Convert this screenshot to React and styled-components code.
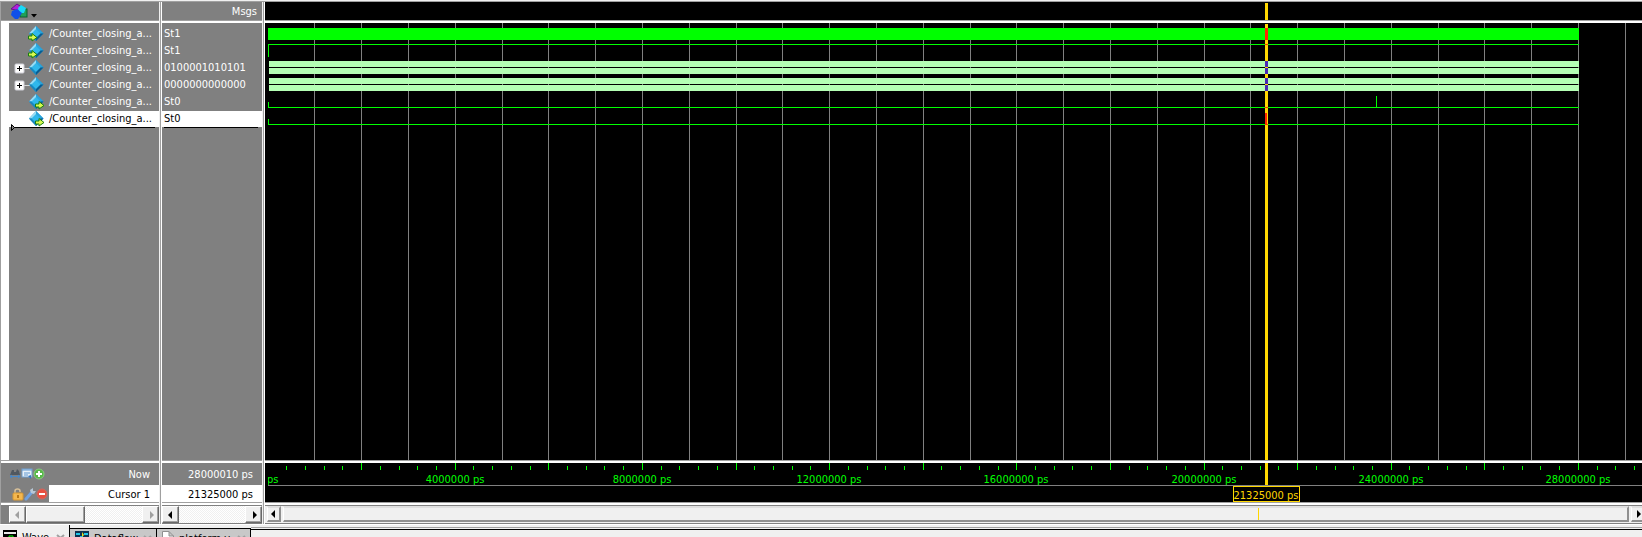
import React from "react";
import styled, { createGlobalStyle, css } from "styled-components";

const gray = "#808080";
const face = "#f0f0f0";
const edge = "#a0a0a0";
const lime = "#00ff00";
const gold = "#ffd700";
const font = '"DejaVu Sans Condensed", "DejaVu Sans", sans-serif';

const GlobalStyle = createGlobalStyle`
  * { box-sizing: border-box; }
  body { margin: 0; overflow: hidden; background: ${face}; }
  button { font: inherit; padding: 0; margin: 0; }
`;

const Window = styled.main`
  display: flex;
  flex-direction: column;
  height: 100vh;
  overflow: hidden;
  background: ${face};
  color: #fff;
  font-family: ${font};
  font-size: 11px;
  line-height: 17px;
`;

const Viewer = styled.section`
  display: flex;
  flex: 1;
  min-height: 0;
  border-top: 1px solid ${edge};
  margin-top: 1px;
`;

const Pane = styled.div`
  display: flex;
  flex-direction: column;
  flex: ${(p) => (p.$width ? `0 0 ${p.$width}px` : "1 1 0")};
  min-width: 0;
  border-left: ${(p) => (p.$edge ? `1px solid ${edge}` : "0")};
  background: ${(p) => (p.$dark ? "#000" : gray)};
`;

const VerticalSash = styled.div`
  flex: 0 0 3px;
  border-left: 1px solid ${face};
  border-right: 1px solid #fff;
  background: ${edge};
`;

const HorizontalSash = styled.div`
  flex: 0 0 3px;
  border-top: 1px solid ${edge};
  background: #fff;
`;

const PaneHeader = styled.header`
  display: flex;
  align-items: center;
  justify-content: ${(p) => (p.$end ? "flex-end" : "flex-start")};
  flex: 0 0 18px;
  padding: 1px 5px 0 8px;
  overflow: hidden;
`;

const MenuButton = styled.button`
  display: flex;
  border: 0;
  background: none;
`;

const PaneBody = styled.div`
  flex: 1;
  min-height: 0;
  overflow: hidden;
  padding-top: ${(p) => (p.$chart ? 0 : 2)}px;
  border-left: ${(p) => (p.$gutter ? "8px solid #fff" : "0")};
`;

const SignalList = styled.ul`
  position: relative;
  margin: 0;
  padding: 0;
  list-style: none;
`;

const selectedRow = css`
  background: linear-gradient(${gray} 1px, #fff 1px);
  color: #000;
`;

const SignalRow = styled.li`
  display: flex;
  align-items: center;
  height: 17px;
  padding-left: ${(p) => p.$indent || 0}px;
  white-space: nowrap;
  ${(p) => p.$selected && selectedRow}
`;

const InsertLine = styled.hr`
  height: 1px;
  margin: 0 4px 0 ${(p) => p.$start}px;
  border: 0;
  background: #000;
`;

const InsertMark = styled.svg`
  position: absolute;
  left: 2px;
  bottom: -3px;
`;

const Icon = styled.svg`
  display: block;
  flex: none;
`;

const Footer = styled.footer`
  display: grid;
  grid-template-rows: 22px 17px;
  flex: none;
`;

const FooterRow = styled.div`
  display: flex;
  align-items: center;
  justify-content: flex-end;
  min-width: 0;
`;

const FooterTools = styled.div`
  display: flex;
  flex: 0 0 48px;
  padding-left: ${(p) => p.$inset}px;
`;

const ToolButton = styled.button`
  display: block;
  width: 12px;
  height: 14px;
  border: 0;
  background: none;
`;

const FooterText = styled.span`
  flex: 1;
  height: 100%;
  padding: ${(p) => (p.$cursor ? 1 : 3)}px 9px 0 0;
  text-align: right;
  background: ${(p) => (p.$cursor ? "#fff" : "transparent")};
  color: ${(p) => (p.$cursor ? "#000" : "#fff")};
`;

const Chart = styled.svg`
  display: block;
  width: 100%;
  height: ${(p) => (p.$height ? `${p.$height}px` : "100%")};
  background: #000;
  font-family: ${font};
  font-size: 11px;
  shape-rendering: crispEdges;
`;

const SmallBar = styled.div`
  display: flex;
  height: 19px;
  flex: none;
  margin-left: ${(p) => p.$offset || 0}px;
  border-top: 1px solid ${gray};
  border-bottom: 1px solid ${gray};
  background: repeating-conic-gradient(#fff 0 25%, ${face} 0 50%) 0 0 / 2px 2px;
`;

const raised = css`
  border: 1px solid;
  border-color: #fff #696969 #696969 #fff;
  background: ${face};
  box-shadow: inset -1px -1px 0 ${edge};
`;

const ArrowButton = styled.button`
  display: flex;
  align-items: center;
  justify-content: center;
  flex: 0 0 17px;
  ${raised}
`;

const Thumb = styled.div`
  flex: 0 0 59px;
  ${raised}
`;

const Spacer = styled.div`
  flex: 1;
`;

const WideBar = styled.div`
  display: flex;
  gap: 2px;
  flex: none;
  height: 19px;
  margin-right: -3px;
  padding: 0 0 1px 2px;
  border-top: 1px solid ${gray};
  border-bottom: 1px solid ${gray};
  background: ${face};
`;

const wideRaised = css`
  border: 0 solid;
  border-width: 2px 2px 2px 1px;
  border-color: #e0e0e0 #909090 #909090 #fff;
  background: ${face};
`;

const WideArrow = styled.button`
  display: flex;
  align-items: center;
  justify-content: center;
  flex: 0 0 14px;
  ${wideRaised}
`;

const WideThumb = styled.div`
  position: relative;
  flex: 1;
  ${wideRaised}
`;

const ThumbMarker = styled.i`
  position: absolute;
  top: 0;
  bottom: 0;
  left: calc(100% - 369px);
  width: 1px;
  background: ${gold};
`;

const TabStrip = styled.nav`
  display: flex;
  flex: 0 0 13px;
  overflow: hidden;
  border-top: 1px solid #fff;
  background: ${face};
  color: #000;
`;

const Tab = styled.button`
  display: flex;
  align-items: center;
  gap: 5px;
  flex: 0 0 ${(p) => p.$width}px;
  height: ${(p) => (p.$active ? 24 : 20)}px;
  margin-top: ${(p) => (p.$active ? 0 : 3)}px;
  padding: ${(p) => (p.$active ? 1 : 0)}px 4px 0 ${(p) => (p.$active ? 3 : 5)}px;
  border: 0 solid #000;
  border-width: ${(p) => (p.$active ? "0 1px 0 0" : "1px 1px 0 0")};
  background: ${(p) => (p.$active ? face : "#c8c8c8")};
  color: #000;
`;

const TabLabel = styled.span`
  flex: 1;
  text-align: left;
`;

const TabRest = styled.div`
  flex: 1;
  height: 3px;
  margin-top: 2px;
  border-top: 1px solid ${edge};
  border-bottom: 1px solid #000;
`;

const Triangle = ({ dir, color = "#000" }) => (
  <Icon width="6" height="8" viewBox="0 0 6 8">
    <path d={dir === "left" ? "M4 0V8L0 4Z" : "M2 0V8L6 4Z"} fill={color} />
  </Icon>
);

const GreenArrow = ({ x }) => (
  <path
    transform={`translate(${x} 8)`}
    d="M0.500 3H4V0.500L9 4.500L4 8V6H0.500Z"
    fill="#d8f850"
    stroke="#188010"
    strokeWidth="1"
    strokeLinejoin="round"
  />
);

const SignalIcon = ({ kind }) => (
  <Icon width="40" height="17" viewBox="0 0 40 17">
    {kind === "bus" && (
      <>
        <path d="M15 9.500H21" stroke="#d8d8d8" />
        <rect x="6" y="5" width="9" height="9" rx="1" fill="#fff" stroke="#d0d0d8" />
        <path d="M8 9.500H13M10.500 7V12" stroke="#000" />
      </>
    )}
    <path d="M27 1L20 8.500L27 16L34.500 8.500Z" fill="#1c94cc" />
    <path d="M27 1L20 8.500H27Z" fill="#9adcf4" />
    <path d="M27 1L34.500 8.500H27Z" fill="#2aa4dc" />
    <path d="M20 8.500L27 16V8.500Z" fill="#1888c0" />
    <path d="M27 16L34.500 8.500H27Z" fill="#0a5c90" />
    <path d="M27 4L22.500 8.500L27 13L31.500 8.500Z" fill="#30b8ec" />
    {kind === "in" && <GreenArrow x={19} />}
    {kind === "out" && <GreenArrow x={26} />}
  </Icon>
);

const ObjectsIcon = () => (
  <Icon width="28" height="17" viewBox="0 0 28 17">
    <path d="M2 6L8 1L14 5L11 8Z" fill="#b020d8" stroke="#68108c" />
    <rect x="11" y="6" width="7" height="8" fill="#20a058" stroke="#086030" />
    <path d="M12 2L17 5L15 10L10 10L9 5Z" fill="#18d8f8" />
    <path d="M3 8L8 6L13 10L9 16H6L2 12Z" fill="#1050e8" />
    <path d="M22 11H28L25 14.500Z" fill="#000" />
  </Icon>
);

const Tool = ({ kind }) => (
  <Icon width="12" height="14" viewBox="0 0 12 14">
    {kind === "find" && (
      <>
        <path d="M1 8L3 3H5V5H7L8 2L10 4L11 8Z" fill="#505860" />
        <path d="M1 9.500H11M3 8L1 9.500L3 11M9 8L11 9.500L9 11" fill="none" stroke="#4888c8" />
      </>
    )}
    {kind === "list" && (
      <>
        <rect x="1" y="2" width="10" height="8" fill="#e8f0f8" stroke="#70a0d0" />
        <path d="M1 3H11M3 6H9M3 8H7" stroke="#6098d0" />
        <path d="M7 9L10 12V8Z" fill="#3878c0" />
      </>
    )}
    {(kind === "add" || kind === "remove") && (
      <>
        <circle cx="6" cy="7" r="5" fill={kind === "add" ? "#58b848" : "#e85040"} stroke={kind === "add" ? "#88cc80" : "#d06860"} />
        <path d={kind === "add" ? "M3 7H9M6 4V10" : "M3 7H9"} stroke="#fff" strokeWidth="2" />
      </>
    )}
    {kind === "lock" && (
      <>
        <path d="M3 7V4Q3 2 5.500 2Q8 2 8 4V5" fill="none" stroke="#d8c098" strokeWidth="1.500" />
        <rect x="1" y="6" width="10" height="7" rx="1" fill="#f4b850" stroke="#d89830" />
        <path d="M5 8H7V11H5Z" fill="#b87818" />
      </>
    )}
    {kind === "wrench" && (
      <>
        <path d="M2 12L8 5" stroke="#70a0e0" strokeWidth="3" strokeLinecap="round" />
        <path d="M7 6L6 3L9 1L9 4L12 4L10 7Z" fill="#b8c8d8" />
      </>
    )}
  </Icon>
);

const TabIcon = ({ kind }) => (
  <Icon width={kind === "file" ? 12 : 14} height="15" viewBox={kind === "file" ? "0 0 12 15" : "0 0 14 15"}>
    {kind === "wave" && (
      <>
        <rect width="14" height="15" fill="#000" />
        <path d="M1 3H13" stroke="#e8e8e8" strokeWidth="2" />
        <path d="M2 9H6V6H10V9H13" fill="none" stroke={lime} />
      </>
    )}
    {kind === "flow" && (
      <>
        <rect width="14" height="15" fill="#103050" />
        <path d="M1 3H5M9 3H13M5 6H8M2 9H5M8 9H12" stroke="#20c8e8" strokeWidth="2" />
        <path d="M7 1L9 4L7 6Z" fill="#f0e020" />
      </>
    )}
    {kind === "file" && <path d="M.5 .5H7L11.500 5V14.500H.5Z M7 .5V5H11.500" fill="#fff" stroke="#909090" />}
  </Icon>
);

const CloseIcon = () => (
  <Icon width="9" height="8" viewBox="0 0 9 8">
    <path d="M1 1L8 7M8 1L1 7" stroke={edge} strokeWidth="2" />
  </Icon>
);

const signals = [
  { name: "/Counter_closing_a...", value: "St1", kind: "in" },
  { name: "/Counter_closing_a...", value: "St1", kind: "in" },
  { name: "/Counter_closing_a...", value: "0100001010101", kind: "bus" },
  { name: "/Counter_closing_a...", value: "0000000000000", kind: "bus" },
  { name: "/Counter_closing_a...", value: "St0", kind: "out" },
  { name: "/Counter_closing_a...", value: "St0", kind: "out", selected: true },
];

/* Time axis: picoseconds in millions to chart pixels. */
const ORIGIN = 3;
const END = 1314;
const CURSOR = 1000;
const toX = (millions) => Math.floor(ORIGIN + millions * 46.8);
const range = (n) => Array.from({ length: n }, (_, i) => i);

const Waves = () => (
  <Chart role="img" aria-label="Signal waveforms">
    {range(60).map((i) => (
      <rect key={i} x={toX(i + 1)} y="0" width="1" height="100%" fill={gray} />
    ))}
    <rect x={CURSOR} y="1" width="3" height="100%" fill={gold} />
    <g fill={lime}>
      <rect x={ORIGIN} y="5" width={END - ORIGIN} height="12" />
      <rect x={ORIGIN} y="21" width={END - ORIGIN} height="1" />
      <rect x={ORIGIN} y="22" width="1" height="12" />
      <rect x={ORIGIN} y="84" width={END - ORIGIN} height="1" />
      <rect x={ORIGIN} y="79" width="1" height="6" />
      <rect x="1111" y="73" width="1" height="11" />
      <rect x={ORIGIN} y="101" width={END - ORIGIN} height="1" />
      <rect x={ORIGIN} y="96" width="1" height="6" />
    </g>
    {[38, 55].map((y) => (
      <g key={y}>
        <rect x={ORIGIN + 1} y={y} width={END - ORIGIN - 1} height="6" fill="#b4ffb4" />
        <rect x={ORIGIN + 1} y={y + 7} width={END - ORIGIN - 1} height="6" fill="#b4ffb4" />
        <rect x={CURSOR} y={y} width="3" height="13" fill="#4b28b4" />
        <rect x={CURSOR} y={y + 6} width="3" height="1" fill={gold} />
      </g>
    ))}
    <g fill="#ff2800">
      <rect x={CURSOR} y="5" width="3" height="12" />
      <rect x={CURSOR} y="21" width="3" height="1" />
      <rect x={CURSOR} y="84" width="3" height="1" />
      <rect x={CURSOR} y="90" width="2" height="12" />
      <rect x={CURSOR} y="101" width="3" height="1" />
    </g>
  </Chart>
);

const Ruler = () => (
  <Chart $height={39} role="img" aria-label="Time ruler">
    <defs>
      <clipPath id="plot">
        <rect x={ORIGIN} y="0" width="100%" height="39" />
      </clipPath>
    </defs>
    {range(150).map((i) => {
      const major = (i + 1) % 5 === 0;
      return (
        <rect key={i} x={toX((i + 1) * 0.4)} y={major ? 0 : 3} width="1" height={major ? 7 : 4} fill={lime} />
      );
    })}
    <g clipPath="url(#plot)" fill={lime} textAnchor="middle">
      {range(8).map((i) => (
        <text key={i} x={toX(i * 4)} y="20">
          {i ? `${i * 4}000000 ps` : "0 ps"}
        </text>
      ))}
    </g>
    <rect x={ORIGIN} y="22" width="100%" height="1" fill={gray} />
    <rect x={CURSOR} y="0" width="3" height="22" fill={gold} />
    <rect x="968.500" y="23.500" width="66" height="15" fill="#000" stroke={gold} />
    <text x="1001" y="36" fill={gold} textAnchor="middle">
      21325000 ps
    </text>
  </Chart>
);

const tabs = [
  { label: "Wave", icon: "wave", width: 70, active: true },
  { label: "Dataflow", icon: "flow", width: 87 },
  { label: "platform.v", icon: "file", width: 94 },
];

export default function App() {
  return (
    <Window>
      <GlobalStyle />
      <Viewer>
        <Pane $width={159} $edge>
          <PaneHeader>
            <MenuButton aria-label="Objects menu">
              <ObjectsIcon />
            </MenuButton>
          </PaneHeader>
          <HorizontalSash />
          <PaneBody $gutter>
            <SignalList>
              {signals.map((s, i) => (
                <SignalRow key={i} $selected={s.selected}>
                  <SignalIcon kind={s.kind} />
                  {s.name}
                </SignalRow>
              ))}
              <InsertLine as="li" $start={4} />
              <InsertMark width="4" height="7" viewBox="0 0 4 7" aria-hidden="true">
                <path d="M.5 .5V6.500L3.500 3.500Z" fill="#808080" stroke="#000" />
              </InsertMark>
            </SignalList>
          </PaneBody>
          <HorizontalSash />
          <Footer>
            <FooterRow>
              <FooterTools $inset={8}>
                {["find", "list", "add"].map((k) => (
                  <ToolButton key={k} aria-label={k}>
                    <Tool kind={k} />
                  </ToolButton>
                ))}
              </FooterTools>
              <FooterText>Now</FooterText>
            </FooterRow>
            <FooterRow>
              <FooterTools $inset={11}>
                {["lock", "wrench", "remove"].map((k) => (
                  <ToolButton key={k} aria-label={k}>
                    <Tool kind={k} />
                  </ToolButton>
                ))}
              </FooterTools>
              <FooterText $cursor>Cursor 1</FooterText>
            </FooterRow>
          </Footer>
          <HorizontalSash />
          <SmallBar $offset={8}>
            <ArrowButton aria-label="Scroll names left">
              <Triangle dir="left" color={edge} />
            </ArrowButton>
            <Thumb />
            <Spacer />
            <ArrowButton aria-label="Scroll names right">
              <Triangle dir="right" color={edge} />
            </ArrowButton>
          </SmallBar>
        </Pane>
        <VerticalSash />
        <Pane $width={100}>
          <PaneHeader $end>Msgs</PaneHeader>
          <HorizontalSash />
          <PaneBody>
            <SignalList>
              {signals.map((s, i) => (
                <SignalRow key={i} $indent={2} $selected={s.selected}>
                  {s.value}
                </SignalRow>
              ))}
              <InsertLine as="li" $start={2} />
            </SignalList>
          </PaneBody>
          <HorizontalSash />
          <Footer>
            <FooterRow>
              <FooterText>28000010 ps</FooterText>
            </FooterRow>
            <FooterRow>
              <FooterText $cursor>21325000 ps</FooterText>
            </FooterRow>
          </Footer>
          <HorizontalSash />
          <SmallBar>
            <ArrowButton aria-label="Scroll values left">
              <Triangle dir="left" />
            </ArrowButton>
            <Spacer />
            <ArrowButton aria-label="Scroll values right">
              <Triangle dir="right" />
            </ArrowButton>
          </SmallBar>
        </Pane>
        <VerticalSash />
        <Pane $dark>
          <Chart $height={18} aria-hidden="true">
            <rect x={CURSOR} y="1" width="3" height="17" fill={gold} />
          </Chart>
          <HorizontalSash />
          <PaneBody $chart>
            <Waves />
          </PaneBody>
          <HorizontalSash />
          <Ruler />
          <HorizontalSash />
          <WideBar>
            <WideArrow aria-label="Scroll waves left">
              <Triangle dir="left" />
            </WideArrow>
            <WideThumb>
              <ThumbMarker />
            </WideThumb>
            <WideArrow aria-label="Scroll waves right">
              <Triangle dir="right" />
            </WideArrow>
          </WideBar>
        </Pane>
      </Viewer>
      <TabStrip aria-label="Documents">
        {tabs.map((t) => (
          <Tab key={t.label} $width={t.width} $active={t.active}>
            <TabIcon kind={t.icon} />
            <TabLabel>{t.label}</TabLabel>
            <CloseIcon />
          </Tab>
        ))}
        <TabRest />
      </TabStrip>
    </Window>
  );
}
